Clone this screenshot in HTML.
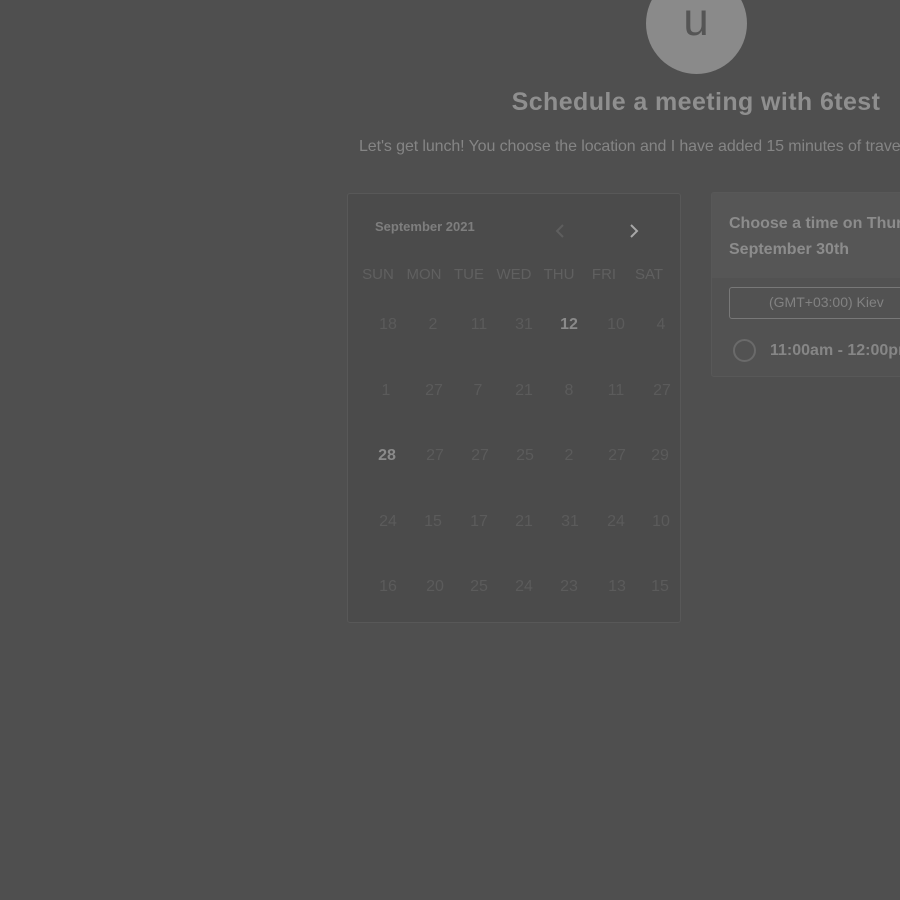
<!DOCTYPE html>
<html><head><meta charset="utf-8"><style>
*{margin:0;padding:0;box-sizing:border-box}
body{width:900px;height:900px;background:#4f4f4f;position:relative;overflow:hidden;font-family:"Liberation Sans",sans-serif}
.a{position:absolute;white-space:nowrap}
.c{transform:translateX(-50%)}
.n{font-size:16px;color:#5b5b5b;top:0}
.h{font-size:15px;color:#606060}
</style></head><body>
<div class="a" style="left:646px;top:-27px;width:101px;height:101px;border-radius:50%;background:#8a8a8a"></div>
<div class="a c" style="left:696px;top:-8px;font-size:46px;color:#555">u</div>
<div class="a c" style="left:696px;top:88px;font-size:25px;font-weight:bold;color:#8f8f8f;letter-spacing:0.4px">Schedule a meeting with 6test</div>
<div class="a" style="left:359px;top:138px;font-size:16px;color:#858585;letter-spacing:-0.1px">Let's get lunch! You choose the location and I have added 15 minutes of travel</div>

<div class="a" style="left:347px;top:193px;width:334px;height:430px;background:#4b4b4b;border:1px solid #585858;border-radius:3px"></div>
<div class="a" style="left:375px;top:219px;font-size:13px;font-weight:bold;color:#7e7e7e">September 2021</div>
<svg class="a" style="left:554px;top:223px" width="12" height="16"><path d="M9 2 L3 8 L9 14" stroke="#5e5e5e" stroke-width="2" fill="none"/></svg>
<svg class="a" style="left:628px;top:223px" width="12" height="16"><path d="M3 2 L9 8 L3 14" stroke="#a8a8a8" stroke-width="2" fill="none"/></svg>

<div class="a c h" style="left:378px;top:266px">SUN</div>
<div class="a c h" style="left:424px;top:266px">MON</div>
<div class="a c h" style="left:469px;top:266px">TUE</div>
<div class="a c h" style="left:514px;top:266px">WED</div>
<div class="a c h" style="left:559px;top:266px">THU</div>
<div class="a c h" style="left:604px;top:266px">FRI</div>
<div class="a c h" style="left:649px;top:266px">SAT</div>

<div class="a" style="left:0;top:316px;width:900px;height:20px">
<span class="a c n" style="left:388px">18</span><span class="a c n" style="left:433px">2</span><span class="a c n" style="left:479px">11</span><span class="a c n" style="left:524px">31</span><span class="a c n" style="left:569px;color:#8a8a8a;font-weight:bold">12</span><span class="a c n" style="left:616px">10</span><span class="a c n" style="left:661px">4</span></div>
<div class="a" style="left:0;top:382px;width:900px;height:20px">
<span class="a c n" style="left:386px">1</span><span class="a c n" style="left:434px">27</span><span class="a c n" style="left:478px">7</span><span class="a c n" style="left:524px">21</span><span class="a c n" style="left:569px">8</span><span class="a c n" style="left:616px">11</span><span class="a c n" style="left:662px">27</span></div>
<div class="a" style="left:0;top:447px;width:900px;height:20px">
<span class="a c n" style="left:387px;color:#8a8a8a;font-weight:bold">28</span><span class="a c n" style="left:435px">27</span><span class="a c n" style="left:480px">27</span><span class="a c n" style="left:525px">25</span><span class="a c n" style="left:569px">2</span><span class="a c n" style="left:617px">27</span><span class="a c n" style="left:660px">29</span></div>
<div class="a" style="left:0;top:513px;width:900px;height:20px">
<span class="a c n" style="left:388px">24</span><span class="a c n" style="left:433px">15</span><span class="a c n" style="left:479px">17</span><span class="a c n" style="left:524px">21</span><span class="a c n" style="left:570px">31</span><span class="a c n" style="left:616px">24</span><span class="a c n" style="left:661px">10</span></div>
<div class="a" style="left:0;top:578px;width:900px;height:20px">
<span class="a c n" style="left:388px">16</span><span class="a c n" style="left:435px">20</span><span class="a c n" style="left:479px">25</span><span class="a c n" style="left:524px">24</span><span class="a c n" style="left:569px">23</span><span class="a c n" style="left:617px">13</span><span class="a c n" style="left:660px">15</span></div>

<div class="a" style="left:711px;top:192px;width:200px;height:185px;background:#525252;border:1px solid #585858;border-radius:3px"></div>
<div class="a" style="left:712px;top:193px;width:200px;height:85px;background:#565656"></div>
<div class="a" style="left:729px;top:211px;font-size:16px;font-weight:bold;color:#8c8c8c;line-height:26px">Choose a time on Thursday<br>September 30th</div>
<div class="a" style="left:729px;top:287px;width:200px;height:32px;border:1px solid #787878;border-radius:3px"></div>
<div class="a" style="left:769px;top:294px;font-size:14px;color:#828282">(GMT+03:00) Kiev</div>
<div class="a" style="left:733px;top:339px;width:23px;height:23px;border:2px solid #6a6a6a;border-radius:50%"></div>
<div class="a" style="left:770px;top:342px;font-size:16px;font-weight:bold;color:#868686">11:00am - 12:00pm</div>
</body></html>
